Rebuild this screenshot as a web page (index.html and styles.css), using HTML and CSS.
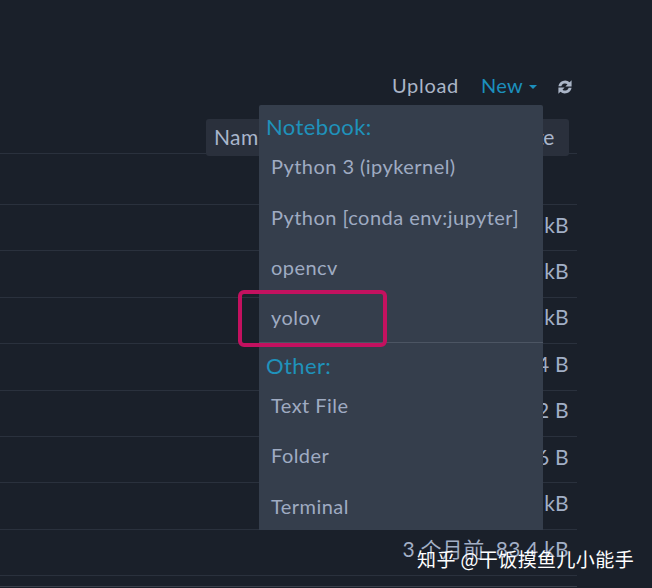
FILE: index.html
```html
<!DOCTYPE html>
<html lang="zh">
<head>
<meta charset="utf-8">
<title>Jupyter</title>
<link rel="stylesheet" href="styles.css">
</head>
<body>
<div class="page">
  <div class="toolbar">
    <span class="tool">Upload</span>
    <span class="tool new">New<i class="caret"></i></span>
    <svg class="refresh" width="16" height="16" viewBox="0 0 16 16" aria-hidden="true">
      <path d="M1.4 7.2A6.8 6.8 0 0 1 12.6 3.2L14.6 1.2V7.4H8.4L10.5 5.3A3.9 3.9 0 0 0 4.3 7.2z" fill="#aab5c7"/>
      <path d="M14.6 8.8A6.8 6.8 0 0 1 3.4 12.8L1.4 14.8V8.6H7.6L5.5 10.7A3.9 3.9 0 0 0 11.7 8.8z" fill="#aab5c7"/>
    </svg>
  </div>
  <div class="table">
    <div class="head"><div class="head-box"><span>Name</span><span class="date">Date</span></div></div>
    <div class="row first"></div>
    <div class="row"><span class="val">9 kB</span></div>
    <div class="row"><span class="val">9 kB</span></div>
    <div class="row"><span class="val">9 kB</span></div>
    <div class="row"><span class="val">4 B</span></div>
    <div class="row"><span class="val">2 B</span></div>
    <div class="row"><span class="val">6 B</span></div>
    <div class="row"><span class="val">9 kB</span></div>
    <div class="row"><span class="val">3 个月前 &nbsp;83.4 kB</span></div>
    <div class="foot"></div>
  </div>
  <div class="menu">
    <div class="menu-title">Notebook:</div>
    <div class="item">Python 3 (ipykernel)</div>
    <div class="item">Python [conda env:jupyter]</div>
    <div class="item">opencv</div>
    <div class="item last">yolov</div>
    <div class="menu-title other">Other:</div>
    <div class="item">Text File</div>
    <div class="item">Folder</div>
    <div class="item">Terminal</div>
  </div>
  <div class="mark"></div>
  <div class="watermark">知乎 @干饭摸鱼儿小能手</div>
</div>
</body>
</html>
```
FILE: styles.css
```css
html, body { margin: 0; padding: 0; }
body { background: #1a202a; font-family: Lato, "Noto Sans CJK SC", sans-serif; color: #a9b6cc; }
.page { position: relative; width: 652px; height: 588px; overflow: hidden; }
.toolbar { height: 119px; box-sizing: border-box; padding: 72px 79px 0 0; display: flex; justify-content: flex-end; align-items: flex-start; font-size: 20px; line-height: 27px; }
.tool { color: #aab5c7; margin-right: 22px; letter-spacing: .7px; }
.new { color: #1c8fbc; margin-right: 20px; display: flex; align-items: center; letter-spacing: .3px; }
.caret { width: 0; height: 0; border: 4px solid transparent; border-top-color: #1c8fbc; border-bottom: 0; margin-left: 6px; margin-top: 3px; }
.refresh { margin-top: 7px; }
.table { width: 577px; font-size: 21px; }
.head { height: 34px; border-bottom: 1px solid #2a313d; }
.head-box { margin: 0 8px 0 206px; height: 37px; box-sizing: border-box; padding: 4px 15px 6px 8px; background: #2a303c; border-radius: 3px; display: flex; justify-content: space-between; line-height: 28px; font-size: 21px; letter-spacing: .4px; }
.date { letter-spacing: -.4px; }
.row { height: 45.4px; box-sizing: content-box; border-bottom: 1px solid #2a313d; display: flex; justify-content: flex-end; align-items: center; padding-right: 8px; }
.row.first { height: 50px; }
.val { color: #a2afc6; line-height: 28px; letter-spacing: .3px; margin-bottom: 6px; }
.foot { height: 10px; border-bottom: 1px solid #3a404b; }
.menu { position: absolute; left: 259px; top: 105px; width: 284px; height: 425px; box-sizing: border-box; background: #353e4c; border-radius: 2px 2px 0 0; padding-top: 7px; font-size: 20px; }
.menu-title { color: #1f92bb; font-size: 22px; line-height: 29px; padding-left: 7px; letter-spacing: .4px; }
.menu-title.other { margin-top: 9.3px; line-height: 28px; }
.item { color: #9fabc2; height: 50.5px; line-height: 50px; padding-left: 12px; letter-spacing: .45px; white-space: nowrap; }
.item.last { border-bottom: 1px solid #4c5563; height: 49px; line-height: 48px; }
.mark { position: absolute; left: 238px; top: 290px; width: 149px; height: 57px; box-sizing: border-box; border: 4px solid #c3115f; border-radius: 6px; }
.watermark { position: absolute; left: 417px; top: 545px; font-family: "Noto Sans CJK SC", sans-serif; font-size: 19px; line-height: 28px; letter-spacing: .4px; color: #fff; white-space: nowrap; }
```
